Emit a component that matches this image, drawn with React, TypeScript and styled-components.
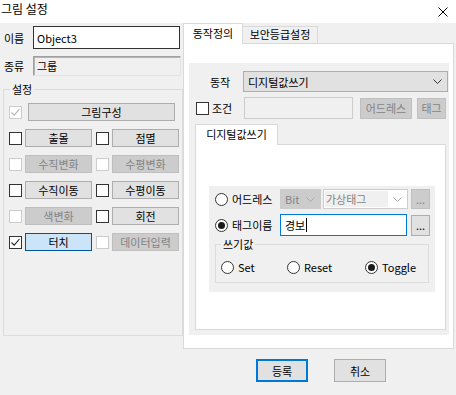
import React from 'react';
import styled, { createGlobalStyle } from 'styled-components';

const GlobalStyle = createGlobalStyle`
  * { box-sizing: border-box; }
  html, body { margin: 0; padding: 0; background: #f0f0f0; }
  body {
    font-family: "Noto Sans CJK KR", "Noto Sans", sans-serif;
    font-size: 11px;
    line-height: 14px;
    color: #000;
  }
`;

const Window = styled.div`
  width: 456px;
  height: 395px;
  display: flex;
  flex-direction: column;
  background: #f0f0f0;
  overflow: hidden;
`;

const TitleBar = styled.div`
  height: 23px;
  flex-shrink: 0;
  background: #fff;
  display: flex;
  align-items: flex-start;
  justify-content: space-between;
  padding: 1px 8px 0 1px;
`;

const Title = styled.span`
  font-size: 12px;
  line-height: 16px;
`;

const CloseIcon = styled.svg`
  margin-top: 6px;
`;

const Main = styled.div`
  display: flex;
  align-items: flex-start;
  height: 326px;
  flex-shrink: 0;
`;

const LeftCol = styled.div`
  width: 183px;
  flex-shrink: 0;
  padding-top: 3px;
  display: flex;
  flex-direction: column;
`;

const FieldRow = styled.div<{ $mt?: number }>`
  display: flex;
  align-items: center;
  margin-top: ${(p) => p.$mt ?? 0}px;
`;

const FieldLabel = styled.span`
  width: 33px;
  padding-left: 4px;
  flex-shrink: 0;
`;

const NameInput = styled.div`
  width: 147px;
  height: 23px;
  border: 1px solid #333;
  background: #fff;
  padding-left: 3px;
  display: flex;
  align-items: center;
`;

const ReadOnlyBox = styled.div`
  width: 148px;
  height: 20px;
  border: 1px solid;
  border-color: #a0a0a0 #e3e3e3 #e3e3e3 #a0a0a0;
  box-shadow: inset 1px 1px 0 #b4b4b4;
  background: #f0f0f0;
  padding-left: 3px;
  display: flex;
  align-items: center;
`;

const GroupBox = styled.div<{ $w: number; $h: number; $mt: number; $ml: number; $pt: number; $pl: number }>`
  position: relative;
  width: ${(p) => p.$w}px;
  height: ${(p) => p.$h}px;
  margin-top: ${(p) => p.$mt}px;
  margin-left: ${(p) => p.$ml}px;
  padding: ${(p) => p.$pt}px 0 0 ${(p) => p.$pl}px;
  border: 1px solid #dcdcdc;
  flex-shrink: 0;
`;

const Legend = styled.span<{ $left: number }>`
  position: absolute;
  top: -8px;
  left: ${(p) => p.$left}px;
  padding: 0 2px;
  background: #f0f0f0;
  line-height: 14px;
`;

const SettingList = styled.div`
  display: flex;
  flex-direction: column;
  gap: 8px;
`;

const SettingRow = styled.div`
  display: flex;
  align-items: center;
  gap: 4px;
`;

const CheckCell = styled.div<{ $gap?: number }>`
  display: flex;
  align-items: center;
  gap: ${(p) => p.$gap ?? 3}px;
`;

const Box = styled.span<{ $disabled?: boolean }>`
  width: 13px;
  height: 13px;
  border: 1px solid ${(p) => (p.$disabled ? '#cccccc' : '#333333')};
  background: #fff;
  display: inline-flex;
  align-items: center;
  justify-content: center;
  flex-shrink: 0;
`;

type Kind = 'normal' | 'disabled' | 'active' | 'default';

const kindStyle: Record<Kind, string> = {
  normal: 'background:#e1e1e1;border:1px solid #adadad;color:#000;',
  disabled: 'background:#cccccc;border:1px solid #bfbfbf;color:#838383;',
  active: 'background:#cce4f7;border:1px solid #005499;color:#000;',
  default: 'background:#e1e1e1;border:2px solid #0078d7;color:#000;',
};

const Btn = styled.button<{ $w: number; $h: number; $kind: Kind; $ml?: number }>`
  width: ${(p) => p.$w}px;
  height: ${(p) => p.$h}px;
  margin: 0 0 0 ${(p) => p.$ml ?? 0}px;
  padding: 0;
  font: inherit;
  display: flex;
  align-items: center;
  justify-content: center;
  flex-shrink: 0;
  ${(p) => kindStyle[p.$kind]}
`;

const RightCol = styled.div`
  width: 271px;
  flex-shrink: 0;
  display: flex;
  flex-direction: column;
`;

const TabStrip = styled.div<{ $pl?: number }>`
  height: 20px;
  display: flex;
  align-items: flex-end;
  padding-left: ${(p) => p.$pl ?? 0}px;
`;

const Tab = styled.div<{ $w: number; $active?: boolean }>`
  width: ${(p) => p.$w}px;
  height: ${(p) => (p.$active ? 21 : 17)}px;
  margin-bottom: ${(p) => (p.$active ? -1 : 0)}px;
  margin-left: ${(p) => (p.$active ? 0 : -1)}px;
  position: relative;
  z-index: ${(p) => (p.$active ? 2 : 1)};
  background: ${(p) => (p.$active ? '#fff' : '#f0f0f0')};
  border: 1px solid #d9d9d9;
  border-bottom: none;
  display: flex;
  align-items: ${(p) => (p.$active ? 'center' : 'flex-start')};
  justify-content: center;
  padding-bottom: ${(p) => (p.$active ? 2 : 0)}px;
`;

const TabPanel = styled.div<{ $w: number; $h: number; $pad: string; $ml?: number }>`
  width: ${(p) => p.$w}px;
  height: ${(p) => p.$h}px;
  margin-left: ${(p) => p.$ml ?? 0}px;
  background: #fff;
  border: 1px solid #d9d9d9;
  padding: ${(p) => p.$pad};
`;

const ActionPane = styled.div`
  width: 260px;
  height: 272px;
  background: #f0f0f0;
  padding-top: 8px;
  display: flex;
  flex-direction: column;
`;

const Row = styled.div<{ $mt?: number; $pl?: number; $h: number }>`
  display: flex;
  align-items: center;
  height: ${(p) => p.$h}px;
  margin-top: ${(p) => p.$mt ?? 0}px;
  padding-left: ${(p) => p.$pl ?? 0}px;
  flex-shrink: 0;
`;

const Text = styled.span<{ $w?: number; $ml?: number; $color?: string }>`
  width: ${(p) => (p.$w ? `${p.$w}px` : 'auto')};
  margin-left: ${(p) => p.$ml ?? 0}px;
  color: ${(p) => p.$color ?? '#000'};
  white-space: nowrap;
  flex-shrink: 0;
`;

const Combo = styled.div<{ $w: number; $h: number; $ml?: number; $disabled?: boolean }>`
  width: ${(p) => p.$w}px;
  height: ${(p) => p.$h}px;
  margin-left: ${(p) => p.$ml ?? 0}px;
  background: ${(p) => (p.$disabled ? '#cccccc' : '#e1e1e1')};
  border: 1px solid ${(p) => (p.$disabled ? '#cccccc' : '#adadad')};
  color: ${(p) => (p.$disabled ? '#838383' : '#000')};
  display: flex;
  align-items: center;
  justify-content: space-between;
  padding: 0 5px 0 4px;
  flex-shrink: 0;
`;

const EditCombo = styled.div<{ $w: number; $h: number; $ml?: number }>`
  width: ${(p) => p.$w}px;
  height: ${(p) => p.$h}px;
  margin-left: ${(p) => p.$ml ?? 0}px;
  background: #fff;
  border: 1px solid #cccccc;
  display: flex;
  align-items: center;
  justify-content: space-between;
  padding: 1px 5px 1px 1px;
  flex-shrink: 0;
`;

const EditArea = styled.span`
  width: 63px;
  height: 100%;
  background: #f0f0f0;
  color: #838383;
  padding-left: 1px;
  display: flex;
  align-items: center;
`;

const TextInput = styled.div<{ $w: number; $h: number; $ml?: number; $state: 'disabled' | 'focus' }>`
  width: ${(p) => p.$w}px;
  height: ${(p) => p.$h}px;
  margin-left: ${(p) => p.$ml ?? 0}px;
  background: ${(p) => (p.$state === 'disabled' ? '#f0f0f0' : '#fff')};
  border: 1px solid ${(p) => (p.$state === 'disabled' ? '#cccccc' : '#0078d7')};
  display: flex;
  align-items: center;
  padding-left: 4px;
  flex-shrink: 0;
`;

const Caret = styled.span`
  width: 1px;
  height: 14px;
  background: #000;
  margin-left: 1px;
`;

const InnerSection = styled.div`
  margin-top: 5px;
  padding-left: 6px;
  display: flex;
  flex-direction: column;
`;

const TargetGroup = styled.div`
  width: 226px;
  height: 106px;
  background: #f0f0f0;
  padding: 3px 0 0 6px;
  display: flex;
  flex-direction: column;
`;

const RadioCircle = styled.span<{ $on?: boolean }>`
  width: 13px;
  height: 13px;
  border-radius: 50%;
  border: 1px solid #333;
  background: #fff;
  display: inline-flex;
  align-items: center;
  justify-content: center;
  flex-shrink: 0;
  &::after {
    content: '';
    width: 7px;
    height: 7px;
    border-radius: 50%;
    background: #1a1a1a;
    display: ${(p) => (p.$on ? 'block' : 'none')};
  }
`;

const ValueGrid = styled.div`
  display: grid;
  grid-template-columns: 66px 78px auto;
  height: 13px;
  align-items: center;
`;

const RadioOption = styled.label`
  display: flex;
  align-items: center;
  gap: 4px;
`;

const Footer = styled.div`
  display: flex;
  gap: 26px;
  padding: 10px 0 0 256px;
`;

const Check = ({ color }: { color: string }) => (
  <svg width="11" height="11" viewBox="0 0 11 11">
    <path d="M1.5 5.5 L4.2 8.2 L9.5 2" fill="none" stroke={color} strokeWidth="1.1" />
  </svg>
);

const Chevron = ({ color }: { color: string }) => (
  <svg width="9" height="5" viewBox="0 0 9 5">
    <path d="M0.5 0.5 L4.5 4.5 L8.5 0.5" fill="none" stroke={color} strokeWidth="1" />
  </svg>
);

type Cell = { label: string; box: 'normal' | 'disabled' | 'checked'; btn: Kind };

const rows: Cell[][] = [
  [
    { label: '출몰', box: 'normal', btn: 'normal' },
    { label: '점멸', box: 'normal', btn: 'normal' },
  ],
  [
    { label: '수직변화', box: 'disabled', btn: 'disabled' },
    { label: '수평변화', box: 'disabled', btn: 'disabled' },
  ],
  [
    { label: '수직이동', box: 'normal', btn: 'normal' },
    { label: '수평이동', box: 'normal', btn: 'normal' },
  ],
  [
    { label: '색변화', box: 'disabled', btn: 'disabled' },
    { label: '회전', box: 'normal', btn: 'normal' },
  ],
  [
    { label: '터치', box: 'checked', btn: 'active' },
    { label: '데이터입력', box: 'disabled', btn: 'disabled' },
  ],
];

export default function App() {
  return (
    <>
      <GlobalStyle />
      <Window>
        <TitleBar>
          <Title>그림 설정</Title>
          <CloseIcon width="10" height="10" viewBox="0 0 10 10">
            <path d="M0.5 0.5 L9.5 9.5 M9.5 0.5 L0.5 9.5" stroke="#000" strokeWidth="1" />
          </CloseIcon>
        </TitleBar>
        <Main>
          <LeftCol>
            <FieldRow>
              <FieldLabel>이름</FieldLabel>
              <NameInput>Object3</NameInput>
            </FieldRow>
            <FieldRow $mt={7}>
              <FieldLabel>종류</FieldLabel>
              <ReadOnlyBox>그룹</ReadOnlyBox>
            </FieldRow>
            <GroupBox $w={180} $h={247} $mt={13} $ml={3} $pt={13} $pl={5}>
              <Legend $left={6}>설정</Legend>
              <SettingList>
                <CheckCell $gap={6}>
                  <Box $disabled>
                    <Check color="#b0b0b0" />
                  </Box>
                  <Btn $w={147} $h={18} $kind="normal">그림구성</Btn>
                </CheckCell>
                {rows.map((r, i) => (
                  <SettingRow key={i}>
                    {r.map((c) => (
                      <CheckCell key={c.label}>
                        <Box $disabled={c.box === 'disabled'}>
                          {c.box === 'checked' && <Check color="#222" />}
                        </Box>
                        <Btn $w={67} $h={18} $kind={c.btn}>{c.label}</Btn>
                      </CheckCell>
                    ))}
                  </SettingRow>
                ))}
              </SettingList>
            </GroupBox>
          </LeftCol>
          <RightCol>
            <TabStrip>
              <Tab $w={60} $active>동작정의</Tab>
              <Tab $w={76}>보안등급설정</Tab>
            </TabStrip>
            <TabPanel $w={271} $h={306} $pad="19px 4px 13px 5px">
              <ActionPane>
                <Row $h={21} $pl={21}>
                  <Text $w={22}>동작</Text>
                  <Combo $w={205} $h={21} $ml={11}>
                    <span>디지털값쓰기</span>
                    <Chevron color="#333" />
                  </Combo>
                </Row>
                <Row $h={22} $mt={5} $pl={7}>
                  <Box />
                  <Text $w={22} $ml={3}>조건</Text>
                  <TextInput $w={109} $h={22} $ml={10} $state="disabled" />
                  <Btn $w={52} $h={21} $kind="disabled" $ml={7}>어드레스</Btn>
                  <Btn $w={29} $h={21} $kind="disabled" $ml={5}>태그</Btn>
                </Row>
                <InnerSection>
                  <TabStrip>
                    <Tab $w={83} $active>디지털값쓰기</Tab>
                  </TabStrip>
                  <TabPanel $w={251} $h={186} $pad="41px 0 0 13px">
                    <TargetGroup>
                      <Row $h={20}>
                        <RadioCircle />
                        <Text $w={44} $ml={4}>어드레스</Text>
                        <Combo $w={41} $h={20} $ml={4} $disabled>
                          <span>Bit</span>
                          <Chevron color="#a8a8a8" />
                        </Combo>
                        <EditCombo $w={85} $h={20} $ml={2}>
                          <EditArea>가상태그</EditArea>
                          <Chevron color="#a8a8a8" />
                        </EditCombo>
                        <Btn $w={19} $h={20} $kind="disabled" $ml={3}>...</Btn>
                      </Row>
                      <Row $h={22} $mt={5}>
                        <RadioCircle $on />
                        <Text $w={44} $ml={4}>태그이름</Text>
                        <TextInput $w={127} $h={22} $ml={4} $state="focus">
                          경보
                          <Caret />
                        </TextInput>
                        <Btn $w={19} $h={21} $kind="normal" $ml={4}>...</Btn>
                      </Row>
                      <GroupBox $w={214} $h={39} $mt={8} $ml={0} $pt={15} $pl={5}>
                        <Legend $left={5}>쓰기값</Legend>
                        <ValueGrid>
                          <RadioOption>
                            <RadioCircle />
                            Set
                          </RadioOption>
                          <RadioOption>
                            <RadioCircle />
                            Reset
                          </RadioOption>
                          <RadioOption>
                            <RadioCircle $on />
                            Toggle
                          </RadioOption>
                        </ValueGrid>
                      </GroupBox>
                    </TargetGroup>
                  </TabPanel>
                </InnerSection>
              </ActionPane>
            </TabPanel>
          </RightCol>
        </Main>
        <Footer>
          <Btn $w={52} $h={23} $kind="default">등록</Btn>
          <Btn $w={52} $h={23} $kind="normal">취소</Btn>
        </Footer>
      </Window>
    </>
  );
}
